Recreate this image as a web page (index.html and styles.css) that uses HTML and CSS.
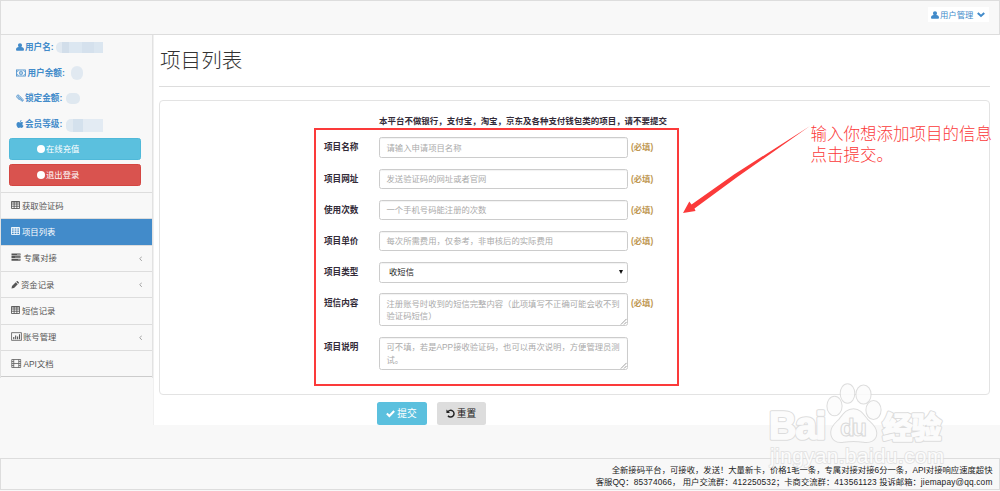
FILE: index.html
```
<!DOCTYPE html>
<html lang="zh-CN">
<head>
<meta charset="utf-8">
<title>项目列表</title>
<link rel="stylesheet" href="styles.css">
</head>
<body>
<svg width="0" height="0" class="defs">
  <defs>
    <symbol id="i-user" viewBox="0 0 14 14"><path d="M7 .3c2.200 0 3.500 1.600 3.500 3.700 0 1.400-.5 2.500-1.300 3.200C12 7.600 14 8.600 14 11.400c0 1.600-.9 2.300-2 2.300H2c-1.100 0-2-.7-2-2.300C0 8.600 2 7.600 4.800 7.200 4 6.500 3.500 5.400 3.500 4 3.500 1.900 4.800.3 7 .3z" fill="currentColor"/></symbol>
    <symbol id="i-money" viewBox="0 0 18 14"><g fill="none" stroke="currentColor" stroke-width="1.400"><rect x=".8" y="1.500" width="16.400" height="11"/><ellipse cx="9" cy="7" rx="2.800" ry="3.500"/><path d="M1 5c2 0 3-1.500 3-3M1 9c2 0 3 1.500 3 3M17 5c-2 0-3-1.500-3-3M17 9c-2 0-3 1.500-3 3M9 5v4"/></g></symbol>
    <symbol id="i-clip" viewBox="0 0 14 14"><path d="M11.500 11.500L5 4.500C4 3.500 2.700 5 3.700 6l6 6.200c1.700 1.500 4-.7 2.500-2.500L5.500 2.500C3.200.2-.4 3.400 1.800 5.900l4.500 4.700" fill="none" stroke="currentColor" stroke-width="1.500"/></symbol>
    <symbol id="i-apple" viewBox="0 0 14 14"><path d="M9.600.2c.2 1.600-1 3.300-2.700 3.400C6.700 2 8 .5 9.600.2zM7.100 4.200c.8 0 1.700-.8 3-.7 1 0 2 .5 2.600 1.400-2.300 1.400-2 4.300.5 5.300-.7 1.900-1.800 3.500-3 3.600-1 0-1.500-.6-2.700-.6s-1.800.6-2.700.6C2.800 13.800.8 10.500.8 7.700c0-2.700 1.600-4.100 3.300-4.200 1.200 0 2.100.7 3 .7z" fill="currentColor"/></symbol>
    <symbol id="i-table" viewBox="0 0 18 16"><path d="M1 1h16v14H1zM1 2h16M1 6h16M1 10.500h16M6.300 1v14M11.700 1v14" fill="none" stroke="currentColor" stroke-width="1.700"/></symbol>
    <symbol id="i-tasks" viewBox="0 0 18 16"><path d="M0 1h18v4H0zM0 6.200h18v4H0zM0 11.400h18v4H0z" fill="currentColor"/><path d="M11 3h6M7 8.200h10M13 13.400h4" stroke="#bbb" stroke-width="1.300"/></symbol>
    <symbol id="i-pencil" viewBox="0 0 16 16"><path d="M1 15l1-5 7.500-7.500 4 4L6 14zM10.500 1.500l1-1c.6-.6 1.500-.4 2 .1l2 2c.5.500.5 1.300 0 1.900l-1 1z" fill="currentColor"/></symbol>
    <symbol id="i-chart" viewBox="0 0 20 16"><path d="M1 1h18v14H1z" fill="none" stroke="currentColor" stroke-width="1.400"/><path d="M4 9h2v4H4zM7.500 6h2v7h-2zM11 8h2v5h-2zM14.500 4h2v9h-2z" fill="currentColor"/></symbol>
    <symbol id="i-film" viewBox="0 0 20 18"><path d="M1 1h18v16H1zM5 1v16M15 1v16M5 9h10M1 5h4M1 9h4M1 13h4M15 5h4M15 9h4M15 13h4" fill="none" stroke="currentColor" stroke-width="1.500"/></symbol>
    <symbol id="i-check" viewBox="0 0 16 14"><path d="M1.500 7l4.500 4.500L14.500 2.500" fill="none" stroke="currentColor" stroke-width="3.600"/></symbol>
    <symbol id="i-undo" viewBox="0 0 16 16"><path d="M3 5.500A6 6 0 1 1 3.500 12" fill="none" stroke="currentColor" stroke-width="2.600"/><path d="M.8.800v6.400h6.400z" fill="currentColor"/></symbol>
    <symbol id="i-down" viewBox="0 0 16 12"><path d="M1.500 3L8 9l6.500-6" fill="none" stroke="currentColor" stroke-width="4"/></symbol>
    <symbol id="i-left" viewBox="0 0 6 10"><path d="M5 1L1.200 5 5 9" fill="none" stroke="currentColor" stroke-width="1.600"/></symbol>
    <symbol id="i-grip" viewBox="0 0 8 8"><path d="M1 7.500L7.500 1M4.500 7.500l3-3" stroke="#777" stroke-width=".8"/></symbol>
  </defs>
</svg>
<div class="page">
  <header class="topbar">
    <div class="user-menu"><svg class="ic-user"><use href="#i-user"/></svg><span>用户管理</span><svg class="ic-down"><use href="#i-down"/></svg></div>
  </header>
  <div class="body">
    <aside class="sidebar">
      <div class="infos">
        <div class="info"><svg class="ic-user"><use href="#i-user"/></svg><b>用户名:</b><i class="mask mask-a"></i></div>
        <div class="info"><svg class="ic-money"><use href="#i-money"/></svg><b>用户余额:</b><i class="mask mask-b"></i></div>
        <div class="info"><svg class="ic-user"><use href="#i-clip"/></svg><b>锁定金额:</b><i class="mask mask-c"></i></div>
        <div class="info"><svg class="ic-user"><use href="#i-apple"/></svg><b>会员等级:</b><i class="mask mask-d"></i></div>
      </div>
      <a class="side-btn recharge"><i class="dot"></i>在线充值</a>
      <a class="side-btn logout"><i class="dot"></i>退出登录</a>
      <nav class="nav">
        <a><svg class="ic-table"><use href="#i-table"/></svg>获取验证码</a>
        <a class="active"><svg class="ic-table"><use href="#i-table"/></svg>项目列表</a>
        <a><svg class="ic-tasks"><use href="#i-tasks"/></svg>专属对接<svg class="ic-left"><use href="#i-left"/></svg></a>
        <a><svg class="ic-pencil"><use href="#i-pencil"/></svg>资金记录<svg class="ic-left"><use href="#i-left"/></svg></a>
        <a><svg class="ic-table"><use href="#i-table"/></svg>短信记录</a>
        <a><svg class="ic-chart"><use href="#i-chart"/></svg>账号管理<svg class="ic-left"><use href="#i-left"/></svg></a>
        <a><svg class="ic-film"><use href="#i-film"/></svg>API文档</a>
      </nav>
    </aside>
    <main class="content">
      <h1>项目列表</h1>
      <section class="panel">
        <p class="notice">本平台不做银行，支付宝，淘宝，京东及各种支付钱包类的项目，请不要提交</p>
        <div class="row"><label>项目名称</label><div class="field">请输入申请项目名称</div><em>(必填)</em></div>
        <div class="row"><label>项目网址</label><div class="field">发送验证码的网址或者官网</div><em>(必填)</em></div>
        <div class="row"><label>使用次数</label><div class="field">一个手机号码能注册的次数</div><em>(必填)</em></div>
        <div class="row"><label>项目单价</label><div class="field">每次所需费用，仅参考，非审核后的实际费用</div><em>(必填)</em></div>
        <div class="row"><label>项目类型</label><div class="field select">收短信<i class="caret"></i></div></div>
        <div class="row"><label>短信内容</label><div class="field area">注册账号时收到的短信完整内容（此项填写不正确可能会收不到<br>验证码短信）<svg class="grip"><use href="#i-grip"/></svg></div><em>(必填)</em></div>
        <div class="row"><label>项目说明</label><div class="field area">可不填，若是APP接收验证码，也可以再次说明，方便管理员测<br>试。<svg class="grip"><use href="#i-grip"/></svg></div></div>
      </section>
      <div class="actions">
        <button class="submit"><svg class="ic-act"><use href="#i-check"/></svg>提交</button>
        <button class="reset"><svg class="ic-act"><use href="#i-undo"/></svg>重置</button>
      </div>
    </main>
  </div>
  <footer class="footer">
    <div>全新接码平台，可接收，发送！大量新卡，价格1毛一条，专属对接对接6分一条，API对接响应速度超快</div>
    <div>客服QQ：<span>85374066</span>， 用户交流群：<span>412250532</span>；卡商交流群：<span>413561123</span> 投诉邮箱：<span>jiemapay@qq.com</span></div>
  </footer>
  <div class="highlight"></div>
  <svg class="arrow" viewBox="0 0 128 88"><path d="M127 0L51 48.500 8.500 78.500 6.300 75.500 0 87 12.500 85 11.500 82.500 55 50.500z"/></svg>
  <div class="annotation">输入你想添加项目的信息<br>点击提交。</div>
  <svg class="watermark" viewBox="0 0 190 92">
    <defs>
      <g id="wm-paw">
        <ellipse cx="69.500" cy="26" rx="6.300" ry="8.500"/>
        <ellipse cx="82.500" cy="13.500" rx="6" ry="8.500"/>
        <ellipse cx="98.500" cy="14.500" rx="6.300" ry="8.300"/>
        <ellipse cx="108.500" cy="30" rx="6.300" ry="8.300"/>
        <path d="M88.500 30c6 0 9 5 13 10 4 4 9 7 9 13 0 7-6 9-12 8-7-1-13-1-20 0-7 1-11.500-2-11.500-9 0-5 4-8 8-12 4-5 7-10 13.500-10z"/>
      </g>
      <g id="wm-words">
        <text x="4" y="59" class="wm-bai" textLength="57">Bai</text>
        <text x="117.500" y="57.500" class="wm-cn" textLength="59">经验</text>
      </g>
    </defs>
    <use href="#wm-paw" class="wm-edge"/>
    <use href="#wm-words" class="wm-edge"/>
    <use href="#wm-paw" class="wm-fill"/>
    <use href="#wm-words" class="wm-fill"/>
    <text x="75" y="56" class="wm-du" textLength="27">du</text>
    <text x="5" y="83" class="wm-url" textLength="174">jingyan.baidu.com</text>
  </svg>
</div>
</body>
</html>
```
FILE: styles.css
```
* { box-sizing: border-box; }
body { margin: 0; background: #f8f8f8; color: #333; font: 8.33px/12px "Liberation Sans", "Noto Sans CJK SC", sans-serif; }
i, em { font-style: normal; }
svg { flex: none; }
.defs { position: absolute; }
.page { position: relative; width: 1000px; height: 491px; overflow: hidden; display: flex; flex-direction: column; }
.topbar { height: 35px; flex: none; border: 1px solid #ddd; display: flex; justify-content: flex-end; padding: 6px 10px 0 0; }
.user-menu { width: 61px; height: 15px; background: #fff; color: #428bca; display: flex; align-items: center; padding-left: 3px; }
.user-menu .ic-down { margin-left: 4px; }
.ic-user { width: 8px; height: 8px; margin-right: 1px; }
.ic-down { width: 8px; height: 7px; }
.body { height: 390px; flex: none; display: flex; }
.sidebar { width: 152.500px; flex: none; border-left: 1px solid #e2e2e2; border-right: 1px solid #e2e2e2; height: 343px; display: flex; flex-direction: column; }
.infos { height: 102.800px; flex: none; }
.info { height: 25.700px; display: flex; align-items: center; padding: 0 0 1.500px 15px; color: #428bca; }
.info b { font-size: 8.600px; white-space: nowrap; }
.ic-money { width: 10px; height: 8px; margin-right: 1.500px; }
.mask { background: #dae5ef; margin-left: 2px; border-radius: 5px 0 0 5px; height: 11px; }
.mask-a { width: 47px; background: linear-gradient(90deg, #e1e9f1 12%, #d2deea 12% 28%, #dce7f1 28% 55%, #d5e1ed 55% 80%, #dbe6f0 80%); }
.mask-b { width: 12px; height: 14px; border-radius: 6px; margin-left: 6px; background: #e1e9f1; }
.mask-c { width: 14px; border-radius: 5px; margin-left: 4px; background: #dfe8f0; }
.mask-d { width: 37px; height: 13px; margin: 3px 0 0 4px; background: linear-gradient(90deg, #e0e9f1 18%, #d4e1ed 18% 45%, #e3ebf3 45%); }
.side-btn { height: 22px; flex: none; width: 131.500px; margin: .4px 0 3.300px 8px; border-radius: 2.500px; color: #fff; display: flex; align-items: center; padding-left: 27px; }
.recharge { background: #5bc0de; border: 1px solid #50b9d9; }
.logout { background: #d9534f; border: 1px solid #d44642; }
.dot { width: 8px; height: 8px; border-radius: 50%; background: #fff; margin-right: 1px; }
.nav { margin-top: 3px; border-top: 1px solid #ddd; }
.nav a { height: 26.300px; display: flex; align-items: center; border-bottom: 1px solid #ddd; padding: 0 9.500px 0 10px; color: #555; }
.nav a:last-child { border-bottom: 1.500px solid #ccc; }
.nav a.active { background: #428bca; color: #fff; }
.nav .ic-table { width: 9px; height: 8px; margin: -2px 2px 0 0; }
.nav .ic-tasks { width: 10px; height: 8px; margin: -2px 2.500px 0 0; }
.nav .ic-pencil { width: 8px; height: 8px; margin-right: 2px; }
.nav .ic-chart { width: 11px; height: 9px; margin: -1px 1px 0 0; }
.nav .ic-film { width: 10.500px; height: 9px; margin-right: 2px; }
.nav .ic-left { width: 3.500px; height: 5.500px; margin-left: auto; color: #999; }
.content { flex: 1; background: #fff; padding: 0 10px 0 5.500px; border-left: 1px solid #f0f0f0; }
h1 { margin: 0; height: 51.500px; padding: 10px 0 0 1px; font-size: 20.600px; line-height: 32px; font-weight: 300; color: #333; border-bottom: 1px solid #ddd; }
.panel { margin-top: 13.500px; height: 295px; border: 1px solid #e3e3e3; border-radius: 4px; padding-left: 164px; }
.notice { margin: 0; padding: 14px 0 0 55px; height: 36.400px; font-size: 8.470px; font-weight: bold; white-space: nowrap; color: #332b38; }
.row { display: flex; margin-bottom: 10.450px; }
.row label { width: 55px; font-size: 8.600px; font-weight: bold; line-height: 21px; color: #332b38; }
.field { position: relative; width: 249px; height: 20.700px; border: 1px solid #ccc; border-radius: 2.500px; padding: 3.500px 7px 0 6.500px; color: #aaa; white-space: nowrap; box-shadow: inset 0 1px 1px #f2f2f2; }
.area { height: 33.300px; line-height: 12.400px; }
.row label, .field + em { height: 20.700px; }
.field + em { margin-left: 3px; line-height: 21px; color: #c09853; font-weight: bold; }
.select { color: #222; padding-left: 9px; }
.caret { position: absolute; right: 4px; top: 7.500px; border: 2.500px solid transparent; border-top: 4.500px solid #111; border-bottom: 0; }
.grip { position: absolute; right: 0; bottom: 0; width: 7px; height: 7px; }
.actions { display: flex; gap: 10px; padding: 7px 0 0 217.500px; }
.actions button { height: 23px; border: 0; border-radius: 2.500px; padding: 0; font: 9.700px/14px "Liberation Sans", "Noto Sans CJK SC", sans-serif; display: flex; align-items: center; justify-content: center; gap: 2px; }
.actions .submit { width: 50px; background: #5bc0de; color: #fff; }
.actions .reset { width: 49px; background: #ddd; color: #222; }
.ic-act { width: 9px; height: 9px; }
.footer { margin-top: 33px; height: 32px; border: 1px solid #ddd; padding: 4.500px 6.500px 0 0; text-align: right; white-space: nowrap; line-height: 12px; color: #222; }
.footer span { letter-spacing: .17px; }
.highlight { position: absolute; left: 314px; top: 127.500px; width: 364.500px; height: 258.500px; border: 2px solid #fb3a3a; }
.arrow { position: absolute; left: 683px; top: 126px; width: 128px; height: 88px; fill: #fb3a3a; }
.annotation { position: absolute; left: 810.500px; top: 124px; font-size: 16.500px; line-height: 21px; font-weight: 300; color: #fb3a3a; white-space: nowrap; }
.watermark { position: absolute; left: 765px; top: 380px; width: 190px; height: 92px; opacity: .85; font-family: "Liberation Sans", "Noto Sans CJK SC", sans-serif; stroke-linejoin: round; }
.wm-edge { fill: #d8d8d8; stroke: #d8d8d8; stroke-width: 3.600; }
.wm-fill { fill: #fcfcfc; stroke: #fcfcfc; stroke-width: 1.600; }
.wm-bai { font-size: 38px; font-weight: bold; }
.wm-du { font-size: 24px; font-weight: bold; fill: #fcfcfc; stroke: #d4d4d4; stroke-width: 1; }
.wm-cn { font-size: 30px; font-weight: bold; }
.wm-url { font-size: 20.500px; fill: #fdfdfd; stroke: #e0e0e0; stroke-width: 1.800; paint-order: stroke; }
```
